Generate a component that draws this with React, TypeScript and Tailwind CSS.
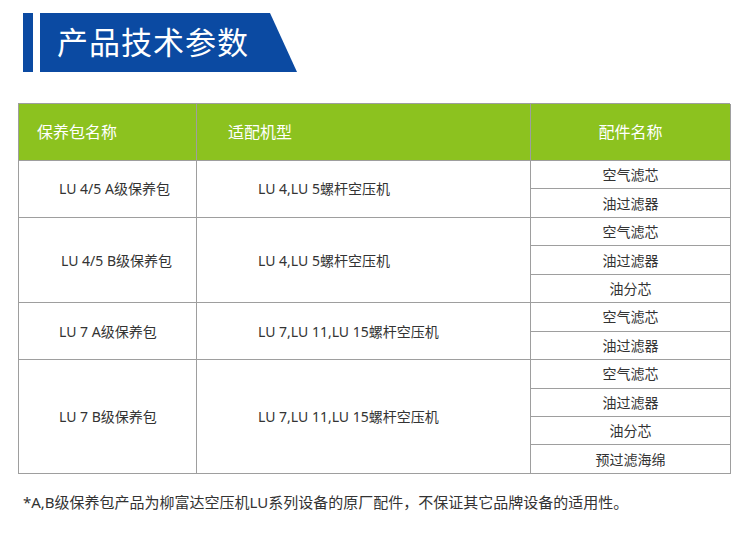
import React from "react";

const groups = [
  { name: "LU 4/5 A级保养包", model: "LU 4,LU 5螺杆空压机", parts: ["空气滤芯", "油过滤器"], pl: "pl-[40px]" },
  { name: "LU 4/5 B级保养包", model: "LU 4,LU 5螺杆空压机", parts: ["空气滤芯", "油过滤器", "油分芯"], pl: "pl-[42px]" },
  { name: "LU 7 A级保养包", model: "LU 7,LU 11,LU 15螺杆空压机", parts: ["空气滤芯", "油过滤器"], pl: "pl-[40px]" },
  { name: "LU 7 B级保养包", model: "LU 7,LU 11,LU 15螺杆空压机", parts: ["空气滤芯", "油过滤器", "油分芯", "预过滤海绵"], pl: "pl-[40px]" },
];

const spanClass: Record<number, string> = {
  2: "row-span-2",
  3: "row-span-3",
  4: "row-span-4",
};

export default function App() {
  return (
    <div
      className="w-[750px] h-[548px] bg-white overflow-hidden text-[#333]"
      style={{ fontFamily: '"Noto Sans", "Noto Sans CJK SC", sans-serif' }}
    >
      {/* Title banner */}
      <div className="flex gap-[7px] pl-[23px] pt-[13px] h-[72px]">
        <div className="w-[10px] h-[59px] bg-[#0b4aa2]" />
        <div className="w-[257px] h-[59px] bg-[#0b4aa2] [clip-path:polygon(0_0,230px_0,100%_100%,0_100%)] flex items-center pl-[17px]">
          <span className="text-white text-[31px] leading-none tracking-[1px]">产品技术参数</span>
        </div>
      </div>

      {/* Table */}
      <div className="ml-[18px] mt-[31px] w-[712px] grid grid-cols-[178px_334px_200px] grid-rows-[57px_repeat(11,28.45px)] border-t border-l border-[#9e9e9e] text-[14px]">
        <div className="bg-[#8cc21f] border-r border-b border-[#9e9e9e] flex items-center pl-[18px] text-white text-[16px]">保养包名称</div>
        <div className="bg-[#8cc21f] border-r border-b border-[#9e9e9e] flex items-center pl-[31px] text-white text-[16px]">适配机型</div>
        <div className="bg-[#8cc21f] border-r border-b border-[#9e9e9e] flex items-center justify-center text-white text-[16px]">配件名称</div>

        {groups.map((g) => (
          <React.Fragment key={g.name}>
            <div className={`${spanClass[g.parts.length]} col-start-1 border-r border-b border-[#9e9e9e] flex items-center ${g.pl}`}>
              {g.name}
            </div>
            <div className={`${spanClass[g.parts.length]} col-start-2 border-r border-b border-[#9e9e9e] flex items-center pl-[61px]`}>
              {g.model}
            </div>
            {g.parts.map((p, i) => (
              <div key={i} className="col-start-3 border-r border-b border-[#9e9e9e] flex items-center justify-center">
                {p}
              </div>
            ))}
          </React.Fragment>
        ))}
      </div>

      {/* Footnote */}
      <p className="pl-[23px] mt-[17px] text-[15px] leading-[22px] text-[#333]">
        *A,B级保养包产品为柳富达空压机LU系列设备的原厂配件，不保证其它品牌设备的适用性。
      </p>
    </div>
  );
}
